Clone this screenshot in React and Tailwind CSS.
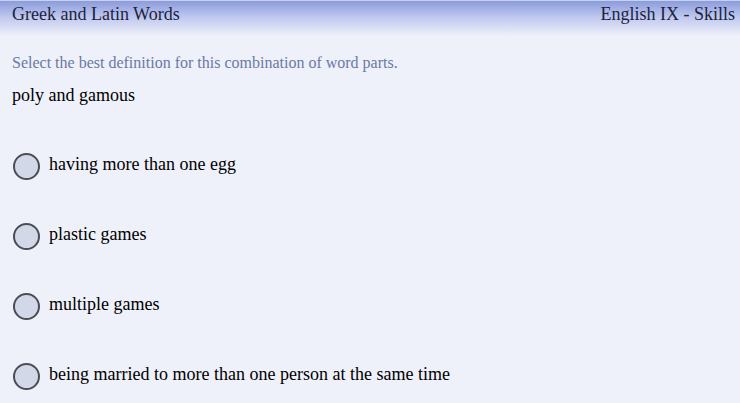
import React from "react";

const options = [
  "having more than one egg",
  "plastic games",
  "multiple games",
  "being married to more than one person at the same time",
];

export default function App() {
  return (
    <div className="w-[740px] h-[403px] overflow-hidden bg-[#eef1fa] text-black font-['Liberation_Serif','Times_New_Roman',serif]">
      {/* Header bar */}
      <div className="h-[36px] flex justify-between items-start px-[12px] pt-[3px] border-t border-[#c9d1f0] bg-gradient-to-b from-[#8c9cdc] via-[#c3cbef] to-[#eef1fa]">
        <span className="text-[18px] leading-[20px] text-[#1c2340]">Greek and Latin Words</span>
        <span className="text-[18px] leading-[20px] text-[#1c2340] -mr-[7px]">English IX - Skills</span>
      </div>

      <div className="px-[12px]">
        <p className="mt-[16px] text-[16px] leading-[22px] text-[#6a79a3]">
          Select the best definition for this combination of word parts.
        </p>
        <p className="mt-[10px] text-[18px] leading-[22px]">poly and gamous</p>

        <ul className="mt-[46px] flex flex-col gap-[42px]">
          {options.map((o) => (
            <li key={o} className="flex items-center gap-[9px] h-[28px] pl-[1px]">
              <span className="w-[27px] h-[27px] rounded-full border-2 border-[#4a4d55] bg-[#d3d8e8] shrink-0" />
              <span className="text-[18px] leading-[22px] -mt-[5px]">{o}</span>
            </li>
          ))}
        </ul>
      </div>
    </div>
  );
}
